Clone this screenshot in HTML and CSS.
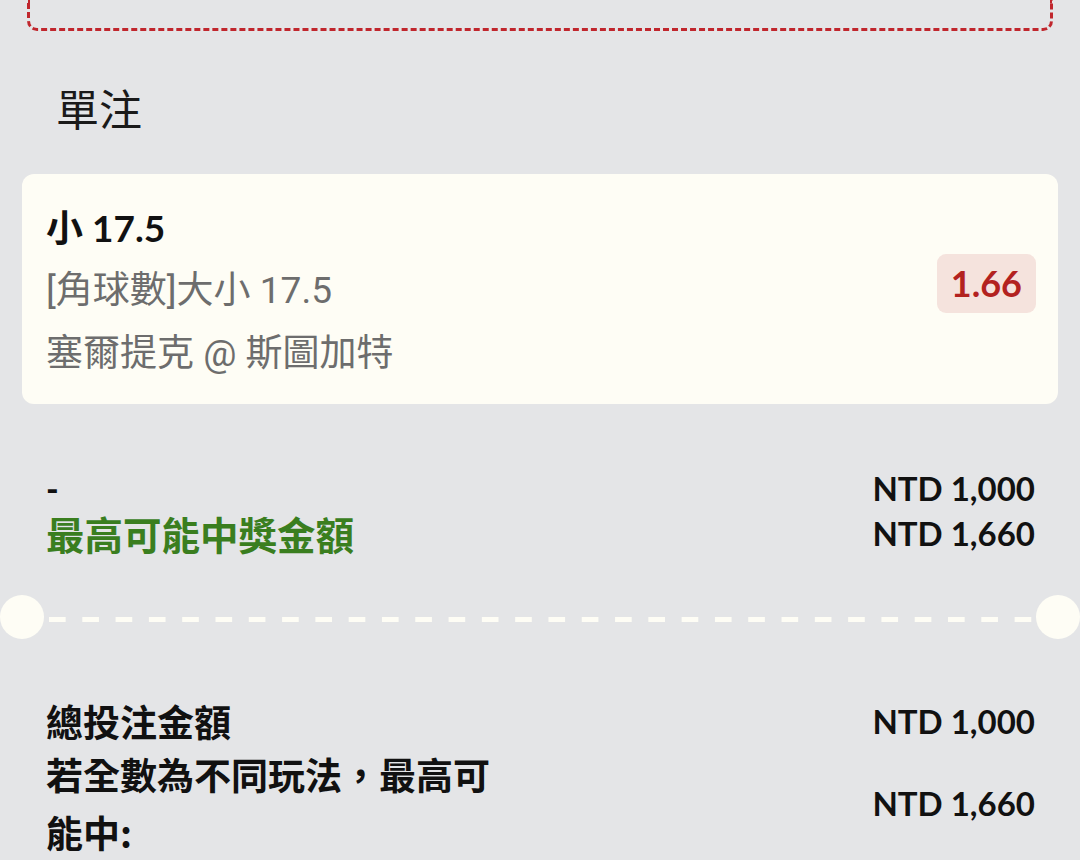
FILE: index.html
```html
<!DOCTYPE html>
<html lang="zh-Hant">
<head>
<meta charset="utf-8">
<link rel="stylesheet" href="styles.css">
</head>
<body>
<div class="page">
  <div class="top-box"></div>

  <h2 class="section-title">單注</h2>

  <div class="bet-card">
    <div class="bet-info">
      <div class="bet-pick">小 17.5</div>
      <div class="bet-market">[角球數]大小 17.5</div>
      <div class="bet-match">塞爾提克 @ 斯圖加特</div>
    </div>
    <div class="odds-badge">1.66</div>
  </div>

  <div class="stake-list">
    <div class="stake-row">
      <span class="stake-label">-</span>
      <span class="amount">NTD 1,000</span>
    </div>
    <div class="stake-row">
      <span class="stake-label win">最高可能中獎金額</span>
      <span class="amount">NTD 1,660</span>
    </div>
  </div>

  <div class="separator">
    <span class="notch"></span>
    <span class="dash-line"></span>
    <span class="notch"></span>
  </div>

  <div class="sum-list">
    <div class="sum-row">
      <span class="sum-label">總投注金額</span>
      <span class="amount">NTD 1,000</span>
    </div>
    <div class="sum-row second">
      <span class="sum-label">若全數為不同玩法，最高可能中:</span>
      <span class="amount">NTD 1,660</span>
    </div>
  </div>
</div>
</body>
</html>
```

FILE: styles.css
```css
* {
  box-sizing: border-box;
}

html, body {
  margin: 0;
  padding: 0;
  background: #e4e5e7;
}

body {
  font-family: "Lato", "Noto Sans CJK TC", sans-serif;
  color: #111;
  width: 1080px;
  height: 860px;
  overflow: hidden;
}

.page {
  display: flex;
  flex-direction: column;
}

.top-box {
  margin: 0 27px 0 27px;
  height: 31px;
  border: 3px dashed #c0262d;
  border-top: none;
  border-radius: 0 0 10px 10px;
}

.section-title {
  margin: 46px 0 0 56px;
  font-family: "Noto Sans CJK TC", sans-serif;
  font-size: 43px;
  font-weight: 400;
  line-height: 60px;
  color: #1a1a1a;
}

.bet-card {
  margin: 37px 22px 0 22px;
  padding: 22px 22px 19px 24px;
  background: #fefdf5;
  border-radius: 12px;
  display: flex;
  justify-content: space-between;
  align-items: center;
}

.bet-info {
  display: flex;
  flex-direction: column;
}

.bet-pick {
  font-size: 37px;
  font-weight: 700;
  line-height: 63px;
  color: #111;
}

.bet-market,
.bet-match {
  font-family: "Roboto", "Noto Sans CJK TC", sans-serif;
  font-size: 37px;
  font-weight: 400;
  line-height: 63px;
  color: #6d6d6d;
}

.odds-badge {
  margin-bottom: 14px;
  background: #f5e3dd;
  color: #b3221f;
  border-radius: 9px;
  font-size: 36px;
  font-weight: 700;
  line-height: 59px;
  padding: 0 14px;
}

.stake-list {
  margin: 61px 45px 0 46px;
  display: flex;
  flex-direction: column;
}

.stake-row {
  display: flex;
  justify-content: space-between;
  align-items: center;
  height: 45px;
}

.stake-label {
  font-size: 34px;
  font-weight: 900;
}

.stake-label.win {
  font-family: "Noto Sans CJK TC", sans-serif;
  font-size: 38.5px;
  font-weight: 700;
  color: #3a7e1f;
}

.amount {
  font-size: 33px;
  font-weight: 700;
  color: #111;
  white-space: nowrap;
}

.separator {
  margin-top: 40px;
  height: 44px;
  display: flex;
  align-items: center;
}

.notch {
  width: 44px;
  height: 44px;
  border-radius: 50%;
  background: #fefdf5;
  flex: none;
}

.dash-line {
  flex: 1;
  height: 5px;
  margin: 4px 4px 0 5px;
  background-image: linear-gradient(to right, #fefdf5 17px, transparent 17px);
  background-size: 33.3px 5px;
  background-repeat: repeat-x;
}

.sum-list {
  margin: 53px 45px 0 46px;
  display: flex;
  flex-direction: column;
}

.sum-row {
  display: flex;
  justify-content: space-between;
  align-items: center;
}

.sum-row.second {
  margin-top: -5px;
}

.sum-label {
  font-family: "Noto Sans CJK TC", sans-serif;
  font-size: 37px;
  font-weight: 700;
  line-height: 58px;
  width: 470px;
}
```
